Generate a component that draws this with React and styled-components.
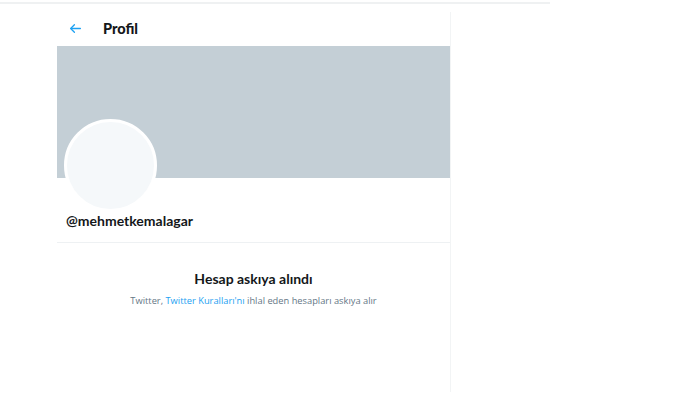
import React from "react";
import styled, { createGlobalStyle } from "styled-components";

const GlobalStyle = createGlobalStyle`
  * { box-sizing: border-box; margin: 0; padding: 0; }
  body {
    background: #ffffff;
    font-family: "Open Sans", "Noto Sans", sans-serif;
    color: #14171a;
  }
`;

const TopLine = styled.div`
  width: 550px;
  height: 2px;
  margin-top: 2px;
  background: #eff1f2;
`;

const Column = styled.main`
  margin-left: 57px;
  margin-top: 8px;
  width: 394px;
  min-height: 380px;
  border-right: 1px solid #f2f4f5;
`;

const Header = styled.header`
  height: 34px;
  display: flex;
  align-items: center;
  padding-left: 12px;
  padding-bottom: 2px;
  gap: 21px;
`;

const BackButton = styled.button`
  border: none;
  background: none;
  display: flex;
  align-items: center;
  color: #1da1f2;
  cursor: pointer;
`;

const Title = styled.h1`
  font-family: "Lato", sans-serif;
  font-size: 14.5px;
  font-weight: 900;
  color: #14171a;
`;

const Banner = styled.div`
  height: 132px;
  background: #c4cfd6;
`;

const ProfileInfo = styled.section`
  display: flex;
  flex-direction: column;
  padding-left: 7px;
  border-bottom: 1px solid #eef1f3;
  height: 65px;
`;

const Avatar = styled.div`
  width: 93px;
  height: 93px;
  margin-top: -59px;
  border-radius: 50%;
  background: #f5f8fa;
  border: 3px solid #ffffff;
  flex-shrink: 0;
`;

const Handle = styled.div`
  font-family: "Lato", sans-serif;
  font-size: 14px;
  font-weight: 700;
  color: #14171a;
  margin-left: 2px;
  line-height: 18px;
`;

const Notice = styled.section`
  display: flex;
  flex-direction: column;
  align-items: center;
  padding-top: 27px;
  gap: 6px;
`;

const NoticeTitle = styled.h2`
  font-family: "Lato", sans-serif;
  font-size: 14px;
  font-weight: 700;
  color: #14171a;
  line-height: 18px;
`;

const NoticeText = styled.p`
  font-size: 9.3px;
  color: #657786;
  line-height: 14px;
`;

const Link = styled.a`
  color: #1da1f2;
  text-decoration: none;
`;

export default function App() {
  return (
    <>
      <GlobalStyle />
      <TopLine />
      <Column>
        <Header>
          <BackButton aria-label="Geri">
            <svg width="13" height="13" viewBox="0 0 24 24" fill="none" stroke="currentColor" strokeWidth="2.4" strokeLinecap="round" strokeLinejoin="round">
              <path d="M21 12H4" />
              <path d="M10 5l-7 7 7 7" />
            </svg>
          </BackButton>
          <Title>Profil</Title>
        </Header>
        <Banner />
        <ProfileInfo>
          <Avatar />
          <Handle>@mehmetkemalagar</Handle>
        </ProfileInfo>
        <Notice>
          <NoticeTitle>Hesap askıya alındı</NoticeTitle>
          <NoticeText>
            Twitter, <Link href="#">Twitter Kuralları'nı</Link> ihlal eden hesapları askıya alır
          </NoticeText>
        </Notice>
      </Column>
    </>
  );
}
